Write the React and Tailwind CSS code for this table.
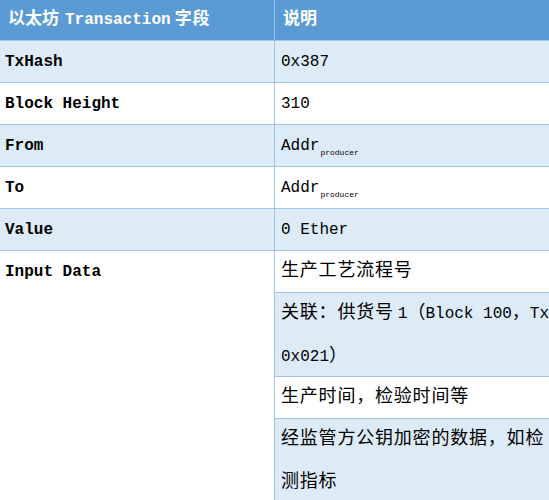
const font = { fontFamily: '"Liberation Mono", "Noto Sans CJK SC", monospace' };

function Cn({ children, className = '' }) {
  return <span className={`text-[18px] tracking-[0.8px] ${className}`}>{children}</span>;
}

function Addr() {
  return (
    <span>
      Addr<sub className="text-[8px] align-[-3px] ml-[1px]">producer</sub>
    </span>
  );
}

const rows = [
  { name: 'TxHash', value: '0x387', shade: true },
  { name: 'Block Height', value: '310', shade: false },
  { name: 'From', value: <Addr />, shade: true },
  { name: 'To', value: <Addr />, shade: false },
  { name: 'Value', value: '0 Ether', shade: true },
];

export default function App() {
  return (
    <div className="w-[549px] h-[500px] overflow-hidden bg-white text-[16px] text-black" style={font}>
      <div className="grid grid-cols-[275px_1fr] h-[41px] bg-[#5b9bd5] border-b border-[#9dc3e6] text-white font-bold">
        <div className="flex items-center pl-[8px] border-r border-[#9dc3e6] whitespace-nowrap">
          <span className="text-[17px]">以太坊</span>
          <span className="ml-[6px]">Transaction</span>
          <span className="text-[17px] ml-[4px] tracking-[1px]">字段</span>
        </div>
        <div className="flex items-center pl-[8px]">
          <span className="text-[17px]">说明</span>
        </div>
      </div>

      {rows.map((r) => (
        <div
          key={r.name}
          className={`grid grid-cols-[275px_1fr] h-[42px] border-b border-[#9dc3e6] ${r.shade ? 'bg-[#ddebf7]' : 'bg-white'}`}
        >
          <div className="flex items-center pl-[5px] border-r border-[#9dc3e6] font-bold whitespace-nowrap">{r.name}</div>
          <div className="flex items-center pl-[6px] whitespace-nowrap">{r.value}</div>
        </div>
      ))}

      <div className="grid grid-cols-[275px_1fr]">
        <div className="bg-white border-r border-[#9dc3e6] pl-[5px] pt-[9px] font-bold">Input Data</div>
        <div className="flex flex-col">
          <div className="h-[42px] flex items-center pl-[6px] bg-white border-b border-[#9dc3e6]">
            <Cn>生产工艺流程号</Cn>
          </div>
          <div className="h-[84px] flex flex-col justify-center pl-[6px] bg-[#ddebf7] border-b border-[#9dc3e6] leading-[42px] whitespace-nowrap">
            <div>
              <Cn className="tracking-[0.4px]">关联：供货号</Cn>
              <span className="ml-[4px]">1</span>
              <Cn className="tracking-[0px]">（</Cn>Block 100<Cn className="tracking-[0px]">，</Cn>Tx
            </div>
            <div>
              0x021<Cn>）</Cn>
            </div>
          </div>
          <div className="h-[42px] flex items-center pl-[6px] bg-white border-b border-[#9dc3e6]">
            <Cn>生产时间，检验时间等</Cn>
          </div>
          <div className="h-[84px] flex flex-col justify-center pl-[6px] bg-[#ddebf7] leading-[42px] whitespace-nowrap">
            <div><Cn>经监管方公钥加密的数据，如检</Cn></div>
            <div><Cn>测指标</Cn></div>
          </div>
        </div>
      </div>
    </div>
  );
}
